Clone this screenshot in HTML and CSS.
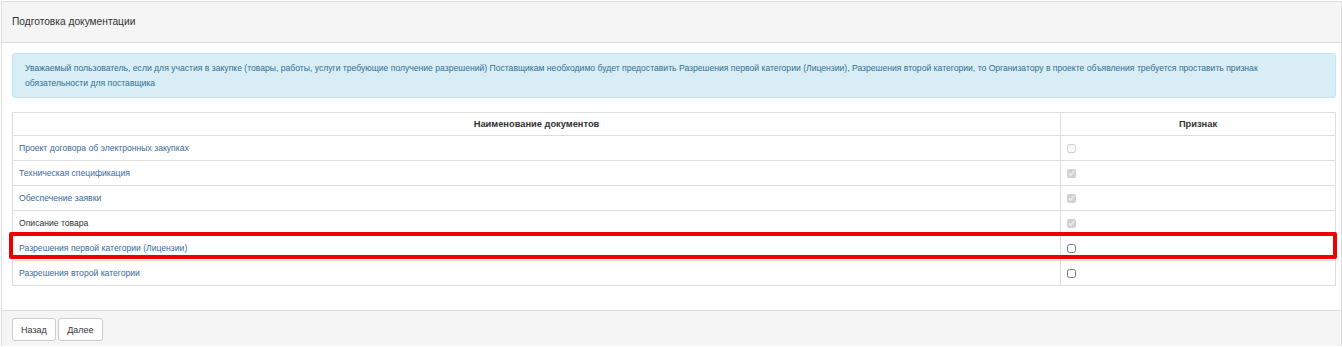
FILE: index.html
```html
<!DOCTYPE html>
<html>
<head>
<meta charset="utf-8">
<title>Подготовка документации</title>
<link rel="stylesheet" href="styles.css">
</head>
<body>
<div class="panel">
  <div class="panel-heading">Подготовка документации</div>
  <div class="panel-body">
    <div class="alert">Уважаемый пользователь, если для участия в закупке (товары, работы, услуги требующие получение разрешений) Поставщикам необходимо будет предоставить Разрешения первой категории (Лицензии), Разрешения второй категории, то Организатору в проекте объявления требуется проставить признак обязательности для поставщика</div>
    <div class="table-wrap">
      <table class="docs">
        <tr>
          <th>Наименование документов</th>
          <th class="col-sign">Признак</th>
        </tr>
        <tr>
          <td><a href="#">Проект договора об электронных закупках</a></td>
          <td><input type="checkbox" disabled></td>
        </tr>
        <tr>
          <td><a href="#">Техническая спецификация</a></td>
          <td><input type="checkbox" checked disabled></td>
        </tr>
        <tr>
          <td><a href="#">Обеспечение заявки</a></td>
          <td><input type="checkbox" checked disabled></td>
        </tr>
        <tr>
          <td>Описание товара</td>
          <td><input type="checkbox" checked disabled></td>
        </tr>
        <tr>
          <td><a href="#">Разрешения первой категории (Лицензии)</a></td>
          <td><input type="checkbox"></td>
        </tr>
        <tr>
          <td><a href="#">Разрешения второй категории</a></td>
          <td><input type="checkbox"></td>
        </tr>
      </table>
      <div class="mark"></div>
    </div>
  </div>
  <div class="panel-footer">
    <button type="button" class="btn">Назад</button>
    <button type="button" class="btn">Далее</button>
  </div>
</div>
</body>
</html>
```

FILE: styles.css
```css
body{
  margin:0;
  padding:1px 0 0 1px;
  font-family:"Liberation Sans", Arial, sans-serif;
  font-size:8.6px;
  color:#333;
  background:#fff;
}
.panel{
  border:1px solid #ddd;
  border-bottom:none;
  height:345px;
  box-sizing:border-box;
  display:flex;
  flex-direction:column;
}
.panel-heading{
  background:#f5f5f5;
  border-bottom:1px solid #ddd;
  padding:0 10px;
  height:40px;
  line-height:40px;
  font-size:10.2px;
}
.panel-body{
  padding:10px 5px 24px 10px;
}
.alert{
  background:#d9edf7;
  border:1px solid #bce8f1;
  border-radius:3px;
  color:#31708f;
  padding:7px 12px;
  line-height:14.5px;
  font-size:8.6px;
  margin-bottom:14px;
}
.table-wrap{position:relative;}
.docs{
  width:100%;
  border-collapse:collapse;
}
.docs th,.docs td{
  border:1px solid #ddd;
  padding:0 6px;
  height:24px;
  text-align:left;
  vertical-align:middle;
}
.docs th{
  text-align:center;
  font-weight:bold;
  font-size:9.3px;
  height:22px;
}
.docs .col-sign{width:262px;}
.docs a{
  color:#3a6a9a;
  text-decoration:none;
}
.docs input{
  display:block;
  width:9px;
  height:9px;
  margin:1px 0 0 0;
}
.mark{
  position:absolute;
  left:-3px;
  right:-1px;
  top:120px;
  height:19px;
  border:4px solid #e00;
  border-radius:2px;
}
.panel-footer{
  flex:1;
  background:#f5f5f5;
  border-top:1px solid #ddd;
  padding:7px 10px;
}
.btn{
  font-family:"Liberation Sans", Arial, sans-serif;
  font-size:9px;
  color:#333;
  background:#fff;
  border:1px solid #ccc;
  border-radius:3px;
  height:23px;
  padding:0 8px;
  margin:0;
}
```
